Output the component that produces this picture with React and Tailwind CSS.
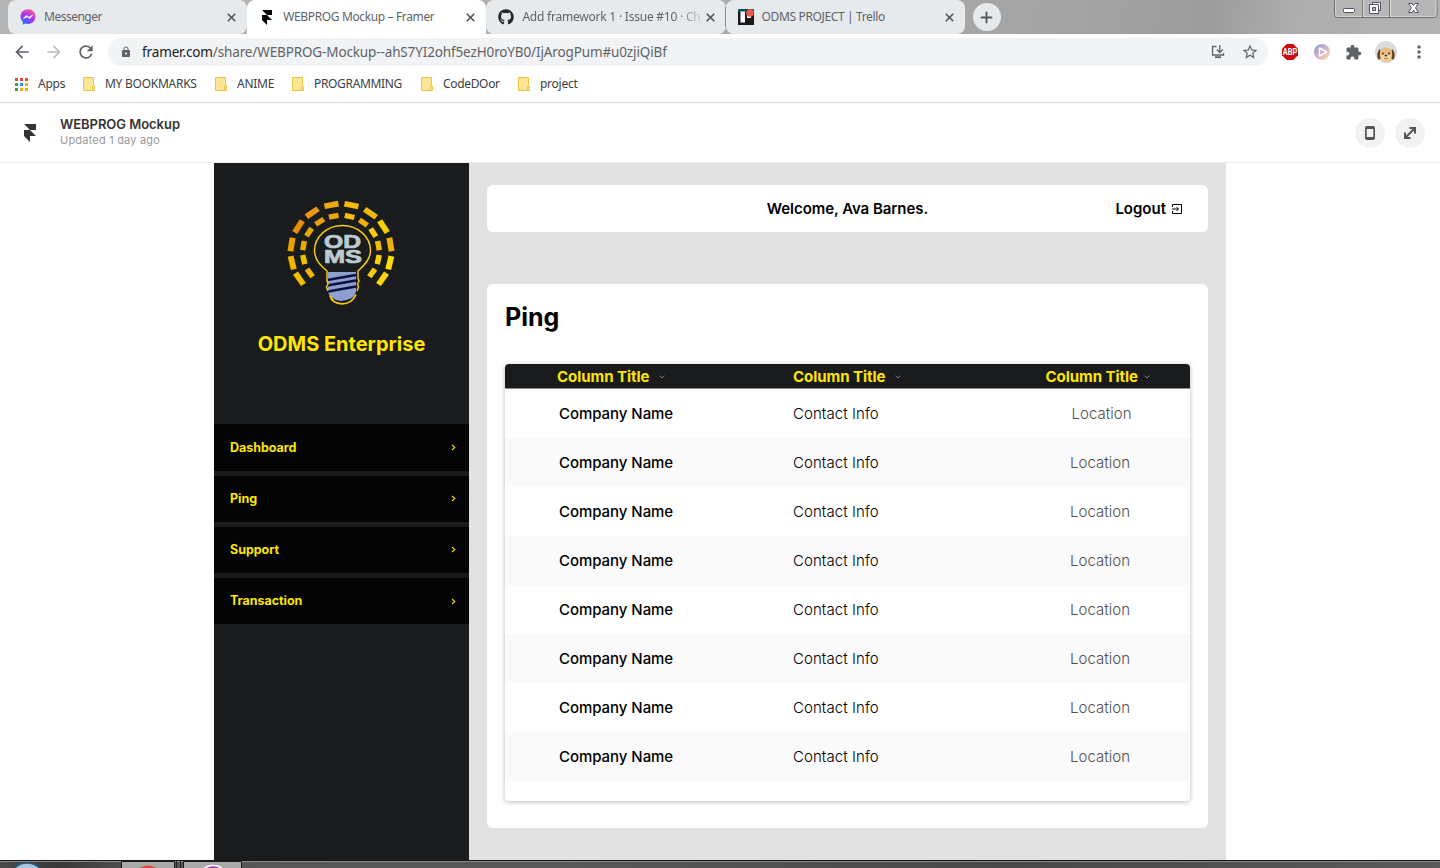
import React from "react";
import { X, Plus } from "lucide-react";
import { FaGithub } from "react-icons/fa";
import { MdLock, MdExtension, MdStarBorder, MdRefresh, MdMoreVert, MdArrowBack, MdArrowForward } from "react-icons/md";

const FramerMark = ({ className }) => (
  <svg viewBox="0 0 12 18" className={className} fill="currentColor">
    <path d="M0 0h12v6H6zM0 6h6l6 6H6v6l-6-6z" />
  </svg>
);

const MessengerIcon = () => (
  <svg viewBox="0 0 16 16" className="h-4 w-4">
    <defs>
      <radialGradient id="msg" cx="0.2" cy="1" r="1.1">
        <stop offset="0" stopColor="#0a7cff" />
        <stop offset="0.6" stopColor="#a033ff" />
        <stop offset="1" stopColor="#ff5c87" />
      </radialGradient>
    </defs>
    <path d="M8 .3C3.600.3.5 3.500.5 7.500c0 2.200.9 4 2.300 5.300V15.700l2.500-1.200c.9.300 1.700.400 2.700.400 4.400 0 7.500-3.200 7.500-7.400S12.400.3 8 .3z" fill="url(#msg)" />
    <path d="M3.500 9.600 6.300 6.400 9 8.400l3.500-2.300-2.800 3.500L7.200 7.700z" fill="#fff" stroke="#fff" strokeWidth=".8" strokeLinejoin="round" />
  </svg>
);

const TrelloIcon = () => (
  <svg viewBox="0 0 16 16" className="h-4 w-4">
    <rect width="16" height="16" rx="1" fill="#0e4b5c" />
    <path d="M0 3h16v13H0z" fill="#1b1a1b" />
    <rect x="2.500" y="2.500" width="4.500" height="11" fill="#fff" />
    <rect x="9" y="5" width="4" height="4" fill="#fff" />
    <circle cx="12" cy="4" r="3.800" fill="#eb5a46" />
  </svg>
);

function Tab({ icon, title, active, fade, divider }) {
  return (
    <div className={"relative flex h-[34px] w-[239.2px] shrink-0 items-center pl-3 pr-[9px] " + (active ? "rounded-t-lg bg-white" : "rounded-lg bg-[#e7eaed]")}>
      {divider && <span className="absolute -left-px top-[7px] h-5 w-px bg-[#8a8c8f]" />}
      <div className="flex w-4 shrink-0 justify-center">{icon}</div>
      <span className={"ml-2 whitespace-nowrap text-[12px] leading-4 text-[#5f6368] " + (fade ? "[mask-image:linear-gradient(to_right,black_84%,rgba(0,0,0,0.2))]" : "")}>{title}</span>
      <X className="ml-auto h-[13px] w-[13px] shrink-0 text-[#55595e]" strokeWidth={3.2} />
    </div>
  );
}

const Folder = () => (
  <svg viewBox="0 0 12 14" className="h-[14px] w-3">
    <path d="M.5.500h10V9.500h1v4H.5z" fill="#ffe694" stroke="#e9c547" />
    <path d="M9.500 13V9.500h1" fill="none" stroke="#e9c547" />
  </svg>
);

const APP_DOTS = ["#ea4335", "#ea4335", "#ea4335", "#34a058", "#2196f3", "#f9ab00", "#34a058", "#f9ab00", "#f9ab00"];

function Bookmark({ label, width }) {
  return (
    <div className="flex items-center">
      <Folder />
      <span className={"ml-[10px] whitespace-nowrap " + width}>{label}</span>
    </div>
  );
}

function WindowControls() {
  return (
    <svg viewBox="0 0 106 18" className="absolute right-0 top-0 h-[18px] w-[106px]">
      <path d="M.5 0v14.500q0 3 3 3h96.500q3 0 3-3V0" fill="#b6b6b6" stroke="#6e6e6e" />
      <path d="M1.500 0v14q0 2.500 2.500 2.500h95.500q2.500 0 2.500-2.500V0M29.500 0v16M56.500 0v16" fill="none" stroke="#d4d4d4" />
      <path d="M28.500 0v17M55.500 0v17" stroke="#777" />
      <rect x="9.500" y="8.500" width="11" height="4" rx="1" fill="#fff" stroke="#4f5466" />
      <path d="M38.500 2.500h8v8h-8z" fill="#fff" stroke="#4f5466" />
      <path d="M35.500 4.500h9v9h-9z" fill="#fff" stroke="#4f5466" />
      <path d="M38.500 7.500h3v3h-3z" fill="#b6b6b6" stroke="#4f5466" />
      <path d="M74.500 3.500h3.500l1.500 2 1.500-2h3.500l-3 4.200 3 4.800H81l-1.500-2.500-1.500 2.500h-3.500l3-4.800z" fill="#fff" stroke="#4f5466" />
    </svg>
  );
}

function BrowserChrome() {
  return (
    <div className="font-['Noto_Sans','Open_Sans',sans-serif]">
      <div className="relative flex h-[34px] bg-[linear-gradient(100deg,#b5b5b5_0%,#aaaaaa_60%,#a3a3a3_75%,#9c9c9c_84%,#aeaeae_90%,#b2b2b2_100%)] pl-2">
        <Tab icon={<MessengerIcon />} title={<span className="tracking-[-0.5px]">Messenger</span>} />
        <Tab icon={<FramerMark className="h-[15px] w-[10px] text-black" />} title={<span className="tracking-[-0.36px]">WEBPROG Mockup – Framer</span>} active />
        <Tab icon={<FaGithub className="h-4 w-4 text-[#24292e]" />} title={<span className="tracking-[-0.22px]">Add framework 1 · Issue #10 · Ch</span>} fade />
        <Tab icon={<TrelloIcon />} title={<span className="tracking-[-0.36px]">ODMS PROJECT | Trello</span>} divider />
        <div className="ml-2 mt-[3px] flex h-7 w-7 items-center justify-center rounded-full bg-[#e7eaed]">
          <Plus className="h-[17px] w-[17px] text-[#55595e]" strokeWidth={2.6} />
        </div>
        <WindowControls />
      </div>

      <div className="flex h-9 items-center bg-white pl-3 text-[#5f6368]">
        <MdArrowBack className="h-5 w-5" />
        <MdArrowForward className="ml-3 h-5 w-5 text-[#bbbdc0]" />
        <MdRefresh className="ml-3 h-5 w-5" />
        <div className="ml-3 flex h-7 w-[1160px] items-center rounded-full bg-[#f1f3f4] pl-3 pr-[9px]">
          <MdLock className="h-[14px] w-3" />
          <span className="ml-[10px] whitespace-nowrap text-[13.500px] tracking-[-0.13px]">
            <span className="text-[#202124]">framer.com</span>/share/WEBPROG-Mockup--ahS7YI2ohf5ezH0roYB0/IjArogPum#u0zjiQiBf
          </span>
          <svg viewBox="0 0 14 14" className="ml-auto h-[14px] w-[14px]" fill="none" stroke="currentColor" strokeWidth="1.300">
            <path d="M5.500 1.500H1.500v8.500h11V8" />
            <path d="M4 12.200h6" strokeWidth="1.800" />
            <path d="M8.800 0v7M5.800 4.500l3 3 3-3" />
          </svg>
          <MdStarBorder className="ml-[16px] h-[18px] w-[18px]" />
        </div>
        <svg viewBox="0 0 16 16" className="ml-[14px] h-4 w-4">
          <path d="M4.700 0h6.600L16 4.700v6.600L11.300 16H4.700L0 11.300V4.700z" fill="#c70d0d" />
          <text x="8" y="11" textAnchor="middle" textLength="14.500" lengthAdjust="spacingAndGlyphs" fontFamily="Roboto" fontWeight="700" fontSize="8.500" fill="#fff">ABP</text>
        </svg>
        <svg viewBox="0 0 16 16" className="ml-4 h-4 w-4">
          <defs>
            <linearGradient id="play" x1="0" y1="0" x2="1" y2="1">
              <stop offset="0" stopColor="#7b9bd0" />
              <stop offset=".5" stopColor="#d7b3cd" />
              <stop offset="1" stopColor="#ffdf9a" />
            </linearGradient>
          </defs>
          <circle cx="8" cy="8" r="8" fill="url(#play)" />
          <path d="M5.500 4v8l7-4z" fill="#c9a9cf" stroke="#fff" strokeWidth="1.500" strokeLinejoin="round" />
        </svg>
        <MdExtension className="ml-[15px] h-[17px] w-[17px]" />
        <svg viewBox="0 0 22 22" className="ml-[13px] h-[22px] w-[22px]">
          <circle cx="11" cy="11" r="11" fill="#dadbdd" />
          <path d="M5 8C2 10 1.500 16 3.500 18.500c2 .5 3-2 3-5zM17 8c3 2 3.500 8 1.500 10.500-2 .5-3-2-3-5z" fill="#6b431f" />
          <path d="M11 6.500c4 0 6.200 2.500 6 6.500.5 4.500-2 8-6 8s-6.500-3.500-6-8c-.2-4 2-6.500 6-6.500z" fill="#e8bd80" />
          <ellipse cx="11" cy="16.500" rx="4.500" ry="3.200" fill="#f5d8a6" />
          <circle cx="8" cy="12.500" r=".9" fill="#333" />
          <circle cx="14" cy="12.500" r=".9" fill="#333" />
          <ellipse cx="11" cy="14.600" rx="1.400" ry=".9" fill="#333" />
          <path d="M9 17.200q2 1.400 4 0" stroke="#8a5a2c" fill="none" strokeWidth=".8" />
        </svg>
        <MdMoreVert className="ml-3 h-5 w-5" />
      </div>

      <div className="flex h-[33px] items-center border-b border-[#dadbdc] bg-white pb-[4px] pl-[15px] text-[12px] tracking-[-0.26px] text-[#3c4043]">
        <div className="grid grid-cols-3 gap-[2px]">
          {APP_DOTS.map((c, i) => (
            <span key={i} className="h-[3px] w-[3px]" style={{ background: c }} />
          ))}
        </div>
        <span className="ml-[10px] w-[45px]">Apps</span>
        <Bookmark label="MY BOOKMARKS" width="w-[110px]" />
        <Bookmark label="ANIME" width="w-[55px]" />
        <Bookmark label="PROGRAMMING" width="w-[107px] tracking-[-0.33px]" />
        <Bookmark label="CodeDOor" width="w-[75px] tracking-[-0.33px]" />
        <Bookmark label="project" width="w-[60px]" />
      </div>
    </div>
  );
}

function FramerHeader() {
  return (
    <header className="flex h-[60px] items-center border-b border-[#eeeeee] bg-white pl-6 pr-[15px]">
      <FramerMark className="h-[18px] w-3 text-[#333]" />
      <div className="-mt-[2px] ml-6 flex flex-col">
        <span className="text-[13px] font-semibold leading-4 tracking-[-0.04px] text-[#333]">WEBPROG Mockup</span>
        <span className="text-[11px] leading-4 tracking-[0.2px] text-[#999]">Updated 1 day ago</span>
      </div>
      <div className="ml-auto flex gap-[10px] text-[#555]">
        <div className="flex h-[30px] w-[30px] items-center justify-center rounded-full bg-[#f2f2f2]">
          <svg viewBox="0 0 10 14" className="h-[14px] w-[10px]">
            <path fillRule="evenodd" fill="currentColor" d="M2 0h6q2 0 2 2v10q0 2-2 2H2q-2 0-2-2V2q0-2 2-2zM1.700 3v8h6.600V3z" />
          </svg>
        </div>
        <div className="flex h-[30px] w-[30px] items-center justify-center rounded-full bg-[#f2f2f2]">
          <svg viewBox="0 0 12 12" className="h-3 w-3" fill="none" stroke="currentColor" strokeWidth="2">
            <path d="M5.500 1H11v5.500M11 1 1 11M1 5.500V11h5.500" />
          </svg>
        </div>
      </div>
    </header>
  );
}

const OUTER = [
  [-124, "#f0c000"], [-103, "#f3b400"], [-81, "#e8a200"], [-58, "#e88c0c"], [-35, "#eb9712"], [-11, "#eaa90c"],
  [12, "#f3b90a"], [36, "#f0b70c"], [58, "#f5d00a"], [81, "#f0b00a"], [103, "#fbdc0a"], [124, "#fbd50a"],
];
const INNER = [
  [-125, "#f3b400"], [-102, "#f0c000"], [-80, "#e8a800"], [-57, "#e8a50c"], [-34, "#e8a00c"], [-11, "#eaa50c"],
  [13, "#f5c00a"], [36, "#f0b00a"], [58, "#f8cc0a"], [80, "#f5bd0a"], [102, "#fbd00a"], [125, "#f8c80a"],
];

function BulbLogo() {
  return (
    <svg viewBox="0 0 140 130" className="h-[130px] w-[140px] -translate-x-[2px]">
      <g transform="translate(71 61) scale(1.020 .977)">
        {OUTER.map(([a, c]) => (
          <rect key={a} x="-7" y="-52" width="14" height="5.800" fill={c} transform={`rotate(${a})`} />
        ))}
        {INNER.map(([a, c]) => (
          <rect key={a} x="-4.800" y="-40" width="9.600" height="5.400" fill={c} transform={`rotate(${a})`} />
        ))}
      </g>
      <path d="M58 81h28v20q-2 8-15 9-11-1-13-9z" fill="#8c9fd0" />
      <path d="M57 89 86 84M57 94.500l29-5M58 100.500l28-5" stroke="#0b0e3c" strokeWidth="2.600" />
      <path d="M57 90V80C51 75 44.500 69 44.500 59.500a28 25 0 0 1 56 0C100.500 69 93 75 88 80v7l1 3-1.500 3 1 3-1.500 4M57 89l1 4-1.500 3 1.500 4" fill="none" stroke="#f5c912" strokeWidth="1.500" />
      <path d="M60 104.500q2 8 12 8.300 10 0 14-9.300" fill="none" stroke="#f5c912" strokeWidth="1.800" />
      <g fill="#bccbd0" stroke="#bccbd0" strokeWidth=".7" fontFamily="'Liberation Sans', sans-serif" fontWeight="700" fontSize="17.500" textAnchor="middle">
        <text x="72.500" y="57" textLength="37" lengthAdjust="spacingAndGlyphs">OD</text>
        <text x="73" y="72" textLength="38" lengthAdjust="spacingAndGlyphs">MS</text>
      </g>
    </svg>
  );
}

function Sidebar() {
  return (
    <aside className="flex w-[255px] shrink-0 flex-col bg-[#191b1c] text-[#ffe600]">
      <div className="flex justify-center pt-[28px]">
        <BulbLogo />
      </div>
      <h1 className="mt-[8px] text-center text-[20px] font-bold leading-[30px]">ODMS Enterprise</h1>
      <nav className="mt-[65.400px] flex flex-col gap-[5px]">
        {["Dashboard", "Ping", "Support", "Transaction"].map((item) => (
          <div key={item} className="flex h-[46.200px] items-center justify-between bg-[#040404] pl-4 pr-[13.500px] text-[12.500px] font-bold tracking-[-0.03px]">
            <span className="pt-[1.600px]">{item}</span>
            <svg viewBox="0 0 5 7" className="h-[7px] w-[5px]" fill="none" stroke="currentColor" strokeWidth="1.100">
              <path d="M1 .8 3.800 3.500 1 6.200" />
            </svg>
          </div>
        ))}
      </nav>
    </aside>
  );
}

const Sort = ({ className }) => (
  <svg viewBox="0 0 6 4" className={"h-1 w-[6px] " + className} fill="none" stroke="#8a8a8a" strokeWidth=".9">
    <path d="M.7.700 3 3 5.300.700" />
  </svg>
);

function PingTable() {
  return (
    <div className="h-[437px] overflow-hidden rounded bg-white text-[15px] tracking-[-0.05px] shadow-[0_1px_5px_rgba(0,0,0,0.28)]">
      <div className="flex h-[25px] items-center border-b border-[#8d8d8d] bg-[#191b1c] pt-[2px] font-bold text-[#ffe600]">
        <div className="flex w-[288px] items-center pl-[52px]">Column Title<Sort className="ml-[9.500px]" /></div>
        <div className="flex w-[252.500px] items-center">Column Title<Sort className="ml-[9.500px]" /></div>
        <div className="flex items-center">Column Title<Sort className="ml-[6px]" /></div>
      </div>
      {Array.from({ length: 8 }, (_, i) => (
        <div key={i} className={"flex h-[49px] items-center pt-[2px] " + (i % 2 ? "bg-[#fafafa]" : "bg-white")}>
          <span className="w-[288px] pl-[54px] font-medium text-black">Company Name</span>
          <span className={"font-[350] tracking-[0.06px] text-black " + (i ? "w-[277px]" : "w-[278.500px]")}>Contact Info</span>
          <span className="font-[350] tracking-[0.02px] text-[#505050]">Location</span>
        </div>
      ))}
    </div>
  );
}

function Taskbar() {
  return (
    <div className="flex h-2 overflow-hidden border-t border-[#151515] bg-[linear-gradient(90deg,#4a4a4a,#383838_4%,#555_10%,#585858_40%,#484848_70%,#5a5a5a)]">
      <svg viewBox="0 0 300 7" className="h-[7px] w-[300px]">
        <path d="M0 .5h300" stroke="#8b8b8b" />
        <circle cx="27" cy="20" r="18" fill="#a9c6df" stroke="#245b80" strokeWidth="1.500" />
        <path d="M121.500 7V.500h53V7" fill="#a9a9a9" stroke="#1c1c1c" />
        <path d="M176.500 0v7M180.500 0v7" stroke="#222" />
        <path d="M183.500 7V.500h58V7" fill="#a9a9a9" stroke="#1c1c1c" />
        <circle cx="148" cy="20" r="15.500" fill="#dd4b3e" />
        <circle cx="213" cy="20" r="15.500" fill="#a534b5" stroke="#fff" strokeWidth="1.500" />
      </svg>
      <div className="h-px flex-1 bg-[#8b8b8b]" />
    </div>
  );
}

export default function App() {
  return (
    <div className="flex h-[868px] w-[1440px] flex-col overflow-hidden bg-white font-['Inter',sans-serif]">
      <BrowserChrome />
      <FramerHeader />
      <div className="ml-[214px] flex h-[697px] w-[1012px]">
        <Sidebar />
        <main className="flex flex-1 flex-col bg-[#e2e2e2] px-[18px] pt-[22px]">
          <div className="grid h-[47px] grid-cols-[1fr_auto_1fr] items-center rounded-md bg-white pr-[26px] pt-[1px] text-[15px] font-semibold tracking-[-0.05px] text-black">
            <span />
            <span className="translate-x-[13px]">Welcome, Ava Barnes.</span>
            <span className="flex items-center justify-end tracking-normal">
              Logout
              <svg viewBox="0 0 10 10" className="-mt-px ml-[6px] h-[10px] w-[10px]" fill="none" stroke="currentColor">
                <path d="M.5 3V.500h9v9h-9V7M0 5h6.500M4.500 3l2 2-2 2" />
              </svg>
            </span>
          </div>
          <section className="mt-[52px] h-[544px] rounded-md bg-white px-[18px] pt-[15px]">
            <h2 className="text-[25px] font-bold leading-9 text-black">Ping</h2>
            <div className="mt-[29px]">
              <PingTable />
            </div>
          </section>
        </main>
      </div>
      <Taskbar />
    </div>
  );
}
